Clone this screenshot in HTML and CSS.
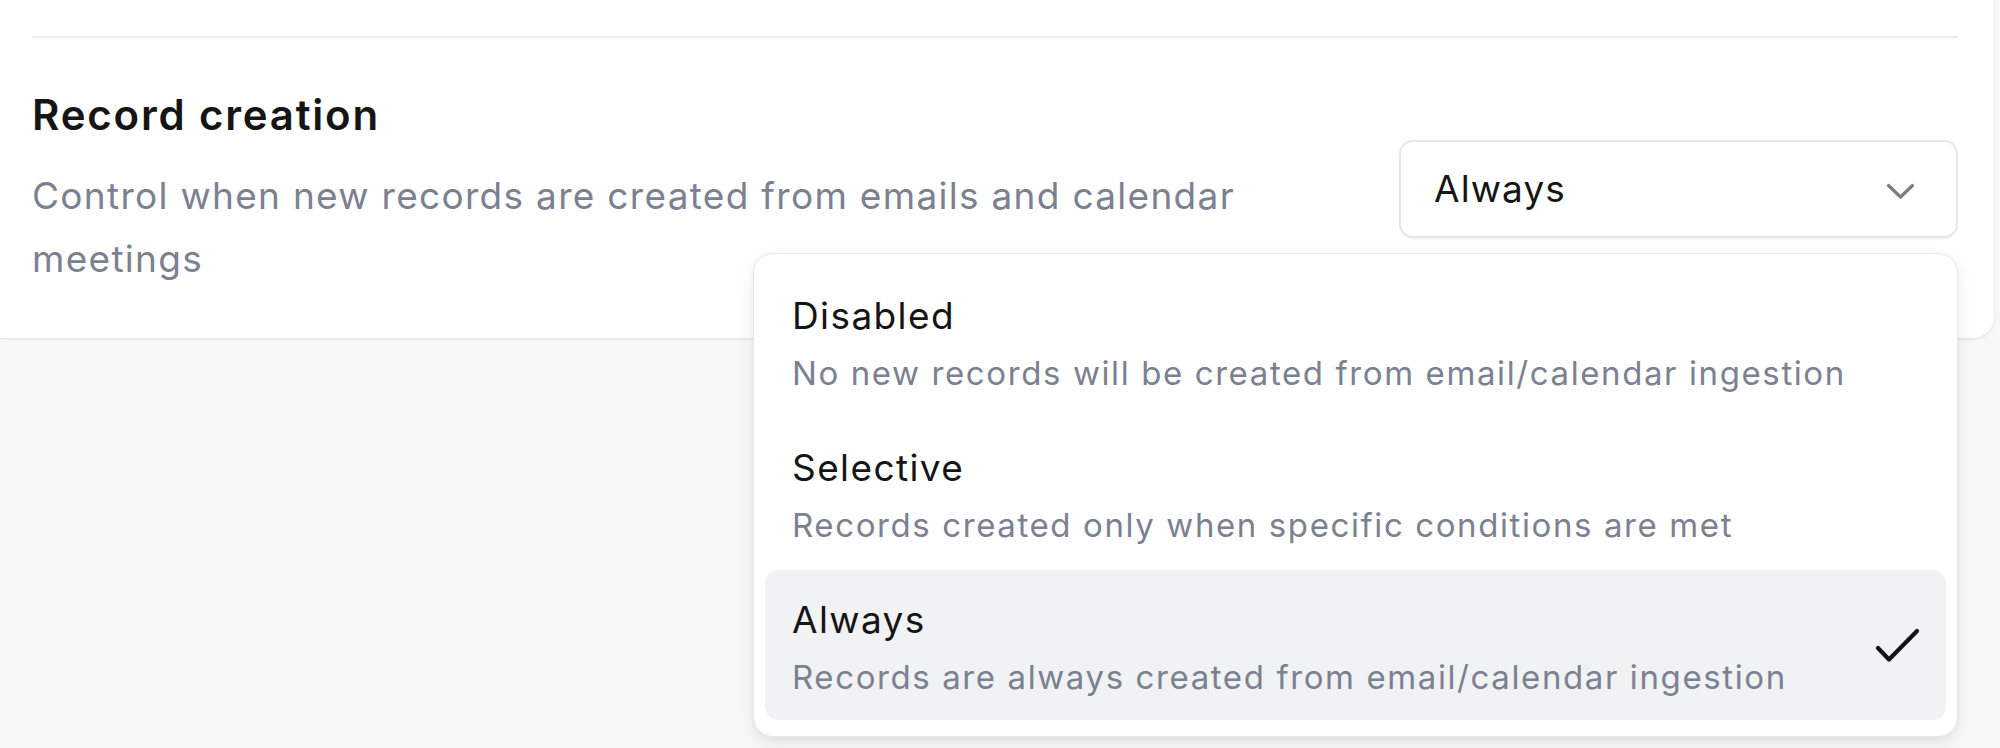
FILE: index.html
```html
<!DOCTYPE html>
<html lang="en">
<head>
<meta charset="utf-8">
<title>Record creation</title>
<link rel="stylesheet" href="styles.css">
</head>
<body>
<div class="card">
  <div class="divider"></div>
  <div class="setting">
    <div class="setting-text">
      <h2 class="setting-title">Record creation</h2>
      <p class="setting-desc">Control when new records are created from emails and calendar meetings</p>
    </div>
    <div class="select-wrap">
      <button class="select">
        <span class="select-value">Always</span>
        <svg class="chevron" width="29" height="17" viewBox="0 0 29 17"><path d="M2.5 2.5 L14.5 14 L26.5 2.5" fill="none" stroke="#7a7d84" stroke-width="3.2" stroke-linecap="round" stroke-linejoin="round"/></svg>
      </button>
      <div class="menu">
        <div class="option">
          <div class="option-text">
            <div class="option-title">Disabled</div>
            <div class="option-sub">No new records will be created from email/calendar ingestion</div>
          </div>
        </div>
        <div class="option">
          <div class="option-text">
            <div class="option-title">Selective</div>
            <div class="option-sub">Records created only when specific conditions are met</div>
          </div>
        </div>
        <div class="option selected">
          <div class="option-text">
            <div class="option-title">Always</div>
            <div class="option-sub">Records are always created from email/calendar ingestion</div>
          </div>
          <svg class="check" width="46" height="38" viewBox="0 0 46 38"><path d="M3 20 L14 31.5 L42 3" fill="none" stroke="#141414" stroke-width="4.2" stroke-linecap="round" stroke-linejoin="round"/></svg>
        </div>
      </div>
    </div>
  </div>
</div>
</body>
</html>
```
FILE: styles.css
```css
* { box-sizing: border-box; }
html, body { margin: 0; padding: 0; }
body {
  background: #f8f8f9;
  font-family: Inter, "Noto Sans", "Liberation Sans", sans-serif;
  width: 2000px;
  height: 748px;
  overflow: hidden;
}
.card {
  width: 1995px;
  background: #ffffff;
  border-bottom-right-radius: 22px;
  border-bottom: 1px solid #e6e6e8;
  border-right: 1px solid #ececee;
  box-shadow: 0 1px 3px rgba(0,0,0,0.05);
  padding: 36px 36px 0 32px;
  height: 339px;
}
.divider {
  height: 2px;
  background: #ececee;
}
.setting {
  display: flex;
  align-items: center;
  justify-content: space-between;
  padding-top: 49px;
}
.setting-text { width: 1300px; }
.setting-title {
  margin: 0;
  font-size: 42px;
  line-height: 56px;
  font-weight: 600;
  color: #151515;
  letter-spacing: 1.8px;
}
.setting-desc {
  margin: 21px 0 0 0;
  width: 1250px;
  font-size: 37px;
  line-height: 63px;
  color: #7b8190;
  font-weight: 400;
  letter-spacing: 1.3px;
}
.select-wrap {
  position: relative;
  width: 559px;
  flex: none;
}
.select {
  width: 100%;
  height: 98px;
  display: flex;
  align-items: center;
  justify-content: space-between;
  padding: 0 41px 0 33px;
  background: #fff;
  border: 2px solid #e7e7e9;
  border-radius: 14px;
  box-shadow: 0 1px 2px rgba(0,0,0,0.05);
  font-family: inherit;
  cursor: pointer;
}
.select-value {
  font-size: 37px;
  color: #151515;
  letter-spacing: 1.1px;
}
.chevron { margin-top: 6px; }
.menu {
  position: absolute;
  right: 0;
  top: 113px;
  width: 1205px;
  background: #fff;
  border: 1px solid #e9e9eb;
  border-radius: 20px;
  box-shadow: 0 8px 20px rgba(0,0,0,0.07), 0 2px 6px rgba(0,0,0,0.05);
  padding: 12px 11px 16px 11px;
  display: flex;
  flex-direction: column;
  gap: 2px;
  z-index: 5;
}
.option {
  display: flex;
  align-items: center;
  justify-content: space-between;
  height: 150px;
  padding: 22px 25px 18px 27px;
  border-radius: 14px;
}
.option.selected { background: #f1f2f4; }
.option-title {
  font-size: 37px;
  line-height: 56px;
  color: #151515;
  letter-spacing: 1.4px;
}
.option-sub {
  margin-top: 4px;
  font-size: 33px;
  line-height: 50px;
  color: #7b8190;
  letter-spacing: 1.6px;
}
.check { flex: none; }
```
